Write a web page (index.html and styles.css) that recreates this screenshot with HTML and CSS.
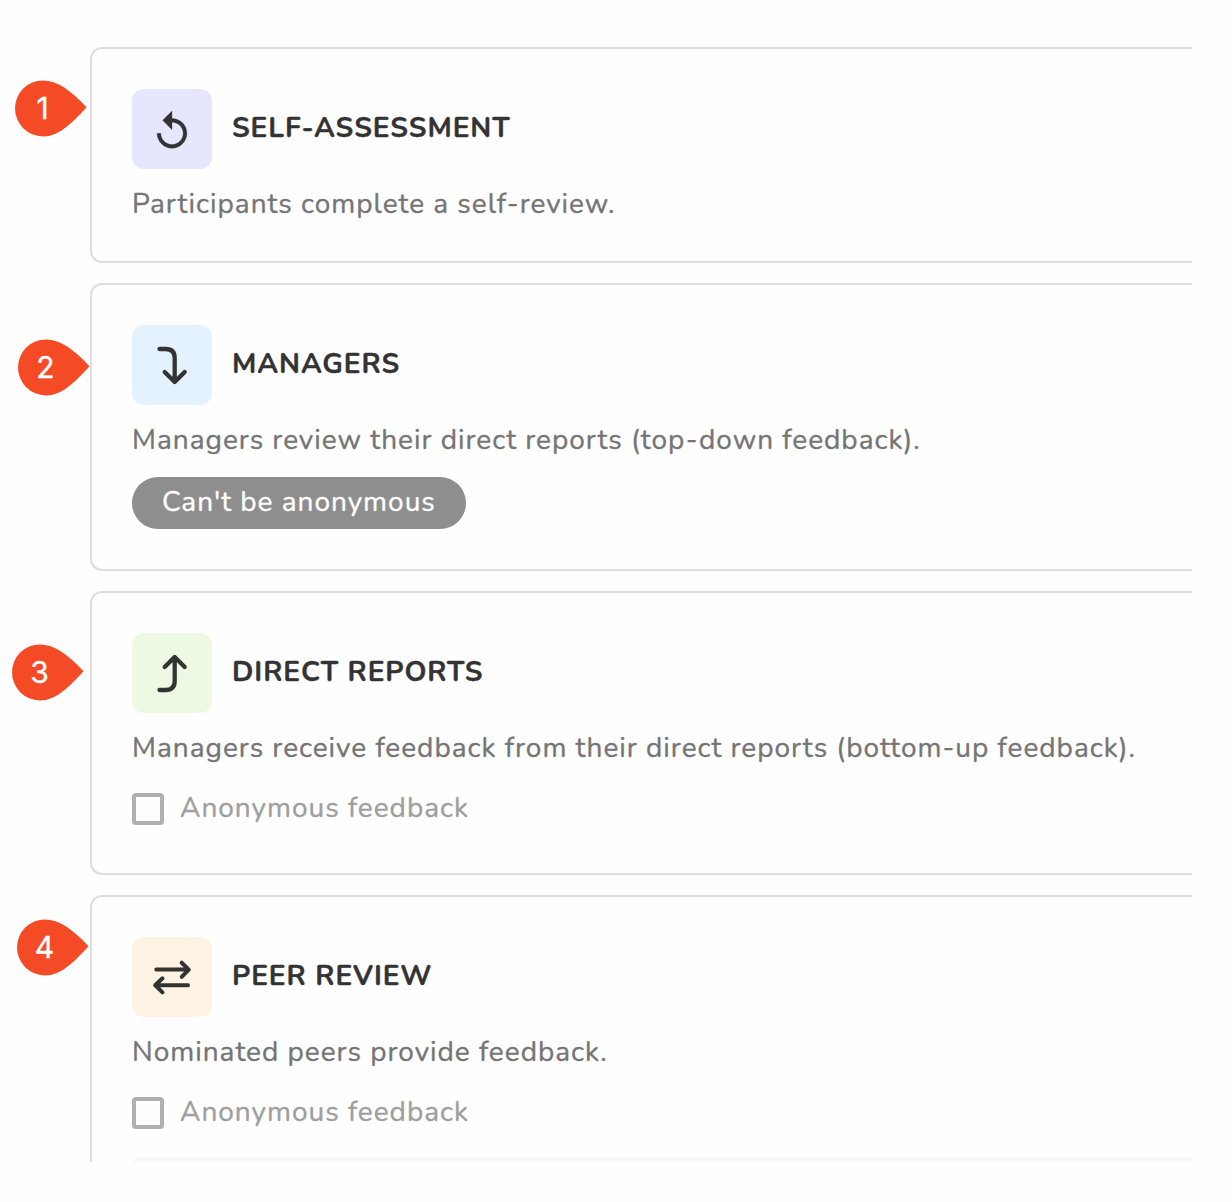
FILE: index.html
```html
<!DOCTYPE html>
<html lang="en">
<head>
<meta charset="utf-8">
<title>Review types</title>
<link rel="stylesheet" href="styles.css">
</head>
<body>
<main class="panel">
  <section class="card">
    <div class="pin pin-1"><svg class="pin-shape" viewBox="0 0 72 56"><path d="M28 0.400C42 0.400 56 10.400 71.500 27.200C56 44.400 43 56.400 28 56.400A28 28 0 0 1 28 0.400Z"/></svg><span class="pin-number">1</span></div>
    <header class="card-header">
      <svg class="tile tile-self" viewBox="0 0 80 80"><path class="solid" transform="translate(17.600 20.100) scale(1.867)" d="M12 5V1L7 6l5 5V7c3.310 0 6 2.690 6 6s-2.690 6-6 6-6-2.690-6-6H4c0 4.420 3.580 8 8 8s8-3.580 8-8-3.580-8-8-8z"/></svg>
      <h2 class="title">SELF-ASSESSMENT</h2>
    </header>
    <p class="description">Participants complete a self-review.</p>
  </section>

  <section class="card">
    <div class="pin pin-2"><svg class="pin-shape" viewBox="0 0 72 56"><path d="M28 0.400C42 0.400 56 10.400 71.500 27.200C56 44.400 43 56.400 28 56.400A28 28 0 0 1 28 0.400Z"/></svg><span class="pin-number">2</span></div>
    <header class="card-header">
      <svg class="tile tile-managers" viewBox="0 0 80 80"><path class="line" d="M27.500 24H33.600Q42.700 24 42.700 33V56.500M32.700 47L42.700 57L52.700 47"/></svg>
      <h2 class="title">MANAGERS</h2>
    </header>
    <p class="description">Managers review their direct reports (top-down feedback).</p>
    <span class="badge">Can't be anonymous</span>
  </section>

  <section class="card">
    <div class="pin pin-3"><svg class="pin-shape" viewBox="0 0 72 56"><path d="M28 0.400C42 0.400 56 10.400 71.500 27.200C56 44.400 43 56.400 28 56.400A28 28 0 0 1 28 0.400Z"/></svg><span class="pin-number">3</span></div>
    <header class="card-header">
      <svg class="tile tile-reports" viewBox="0 0 80 80"><path class="line" d="M27.500 57H33.600Q42.700 57 42.700 48V24.500M32.700 34L42.700 24L52.700 34"/></svg>
      <h2 class="title">DIRECT REPORTS</h2>
    </header>
    <p class="description">Managers receive feedback from their direct reports (bottom-up feedback).</p>
    <label class="option"><span class="checkbox"></span><span class="option-text">Anonymous feedback</span></label>
  </section>

  <section class="card">
    <div class="pin pin-4"><svg class="pin-shape" viewBox="0 0 72 56"><path d="M28 0.400C42 0.400 56 10.400 71.500 27.200C56 44.400 43 56.400 28 56.400A28 28 0 0 1 28 0.400Z"/></svg><span class="pin-number">4</span></div>
    <header class="card-header">
      <svg class="tile tile-peers" viewBox="0 0 80 80"><path class="line line-thin" d="M24.300 32.600H56.500M49.700 25.700L56.800 32.600L49.700 39.800M56 48.300H23.500M30.500 41.300L23.200 48.300L30.500 55.400"/></svg>
      <h2 class="title">PEER REVIEW</h2>
    </header>
    <p class="description">Nominated peers provide feedback.</p>
    <label class="option"><span class="checkbox"></span><span class="option-text">Anonymous feedback</span></label>
    <div class="details"></div>
  </section>
</main>
</body>
</html>
```
FILE: styles.css
```css
* { box-sizing: border-box; }

body {
  margin: 0;
  background: #fefefe;
  font-family: Nunito, Lato, sans-serif;
  font-size: 28px;
  line-height: 36px;
  letter-spacing: 0.99px;
  -webkit-text-stroke: 0.35px;
}

.panel {
  display: flex;
  flex-direction: column;
  gap: 20px;
  width: 1192px;
  height: 1162px;
  padding: 47px 0 0 90px;
  overflow: hidden;
}

.card {
  position: relative;
  display: flex;
  flex: none;
  flex-direction: column;
  align-items: flex-start;
  gap: 20px;
  padding: 40px 0 40px 40px;
  border: 2px solid #dedede;
  border-right: 0;
  border-radius: 12px 0 0 12px;
}

.card-header {
  display: flex;
  align-items: center;
  gap: 20px;
  height: 80px;
}

.tile { width: 80px; height: 80px; border-radius: 12px; }
.tile-self { background: #e6e6ff; }
.tile-managers { background: #e4f2ff; }
.tile-reports { background: #edf9e3; }
.tile-peers { background: #fff4e3; }

.solid { fill: #333; stroke: #333; stroke-width: 0.15px; }
.line {
  fill: none;
  stroke: #333;
  stroke-width: 4.3px;
  stroke-linecap: round;
  stroke-linejoin: round;
}
.line-thin { stroke-width: 4px; }

.title {
  margin: 0;
  padding-bottom: 3px;
  color: #333;
  font-size: 28px;
  font-weight: 700;
  letter-spacing: 0.95px;
  white-space: nowrap;
}

.description {
  height: 36px;
  margin: -4px 0 0;
  color: #757575;
  line-height: 38px;
  white-space: nowrap;
}

.badge {
  width: 334px;
  height: 52px;
  padding: 7px 0 0 30px;
  border-radius: 26px;
  background: #8e8e8e;
  color: #fff;
  white-space: nowrap;
}

.option {
  display: flex;
  align-items: center;
  gap: 16px;
  height: 48px;
  color: #9e9e9e;
}
.option-text { padding-bottom: 2px; white-space: nowrap; }
.checkbox { width: 32px; height: 32px; border: 4px solid #b0b0b0; border-radius: 4px; }

.details {
  width: 100%;
  height: 80px;
  border-radius: 8px 0 0 8px;
  background: #f8f8f8;
}

/* Callout pins hang in the margin to the left of each card */
.pin { position: absolute; width: 72px; height: 56px; }
.pin-1 { left: -77px; top: 31px; }
.pin-2 { left: -74px; top: 54px; }
.pin-3 { left: -80px; top: 51px; }
.pin-4 { left: -75px; top: 22px; }
.pin-shape { display: block; width: 72px; height: 56px; overflow: visible; fill: #f54a26; }
.pin-number {
  position: absolute;
  inset: 0 17px 0 0;
  color: #fff;
  font: 30px/56px Inter, sans-serif;
  letter-spacing: 0;
  text-align: center;
}
```
